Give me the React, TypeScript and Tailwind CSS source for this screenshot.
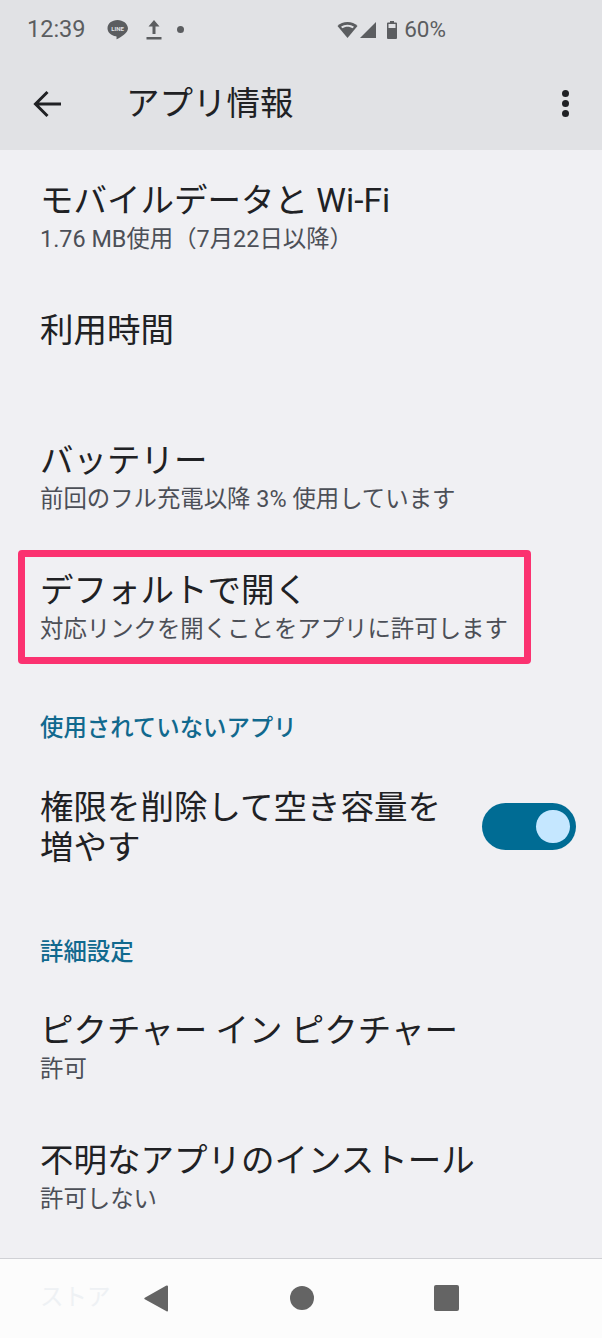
// App.tsx

const font = "font-['Roboto','Noto_Sans_CJK_JP',sans-serif]";

function SettingRow({ title, sub }: { title: string; sub?: string }) {
  return (
    <div className="h-[130px] pl-10 pt-[31px]">
      <div className="text-[33.5px] leading-10 text-[#202124]">{title}</div>
      {sub && <div className="text-[23.4px] leading-9 text-[#4c4f57]">{sub}</div>}
    </div>
  );
}

function SectionLabel({ children, className }: { children: string; className: string }) {
  return <div className={`pl-10 text-[23.4px] leading-9 font-medium text-[#11698e] ${className}`}>{children}</div>;
}

function StatusBar() {
  return (
    <div className="flex h-[57px] items-center pt-[2px] text-[#5b5d60]">
      <span className="ml-[27px] w-[80px] text-[23.5px] leading-none">12:39</span>
      <svg width="21" height="22" viewBox="0 0 21 22" className="fill-[#5b5d60]">
        <path d="M10.5 1C4.9 1 .5 4.6.5 9.2c0 4.1 3.6 7.4 8.4 8 .5.1.8.4.7.9l-.1 1.6c0 .5.3.7.8.4 3.4-2 10.7-6 10.7-10.900C20.500 4.600 16.100 1 10.500 1z" />
        <text x="10.500" y="11.500" textAnchor="middle" className="fill-[#e1e2e5] text-[6px] font-bold">LINE</text>
      </svg>
      <svg width="16" height="20" viewBox="0 0 16 20" className="ml-[18px] fill-[#5b5d60]">
        <path d="M8 0l5.500 6.500H9.500V14h-3V6.500H2.500z" />
        <rect x="0.500" y="17" width="15" height="2.500" />
      </svg>
      <span className="ml-[15px] h-[7px] w-[7px] rounded-full bg-[#5b5d60]" />
      <svg width="21" height="17" viewBox="0 0 21 17" className="ml-auto fill-[#5b5d60]">
        <path d="M10.500 1C6.500 1 3 2.500.5 5l10 12 10-12C18 2.500 14.500 1 10.500 1z" />
        <path d="M4 5.800C5.800 4.500 8 3.700 10.500 3.700S15.200 4.500 17 5.800l-1.400 1.500c-1.400-.9-3.100-1.500-5.100-1.500s-3.700.6-5.100 1.500z" className="fill-[#e1e2e5]" />
      </svg>
      <svg width="16" height="16" viewBox="0 0 16 16" className="ml-[2px] fill-[#5b5d60]">
        <path d="M16 0v16H0z" />
      </svg>
      <svg width="10" height="18" viewBox="0 0 10 18" className="ml-[11px] fill-[#5b5d60]">
        <path d="M3 0h4v1.500h2a1 1 0 0 1 1 1V17a1 1 0 0 1-1 1H1a1 1 0 0 1-1-1V2.500a1 1 0 0 1 1-1h2z" />
        <rect x="1.500" y="3" width="7" height="4" className="fill-[#e1e2e5]" />
      </svg>
      <span className="mr-[156px] ml-[7px] text-[22.5px] leading-none">60%</span>
    </div>
  );
}

function Toolbar() {
  return (
    <div className="flex h-[93px] items-center">
      <svg width="28" height="28" viewBox="0 0 28 28" fill="none" className="ml-[33px] stroke-[#202124]">
        <path d="M28 14H3M14.500 2L2.500 14l12 12" strokeWidth="3" />
      </svg>
      <span className="ml-[65px] text-[33.5px] leading-10 text-[#202124]">アプリ情報</span>
      <div className="mr-[33px] ml-auto flex flex-col gap-[3px]">
        <span className="h-[7px] w-[7px] rounded-full bg-[#202124]" />
        <span className="h-[7px] w-[7px] rounded-full bg-[#202124]" />
        <span className="h-[7px] w-[7px] rounded-full bg-[#202124]" />
      </div>
    </div>
  );
}

function NavBar() {
  return (
    <div className="flex h-[80px] items-center border-t border-[#d0d1d5] bg-[#fcfcfc] pl-[40px] pb-[1px]">
      <span className="w-[104px] text-[23.5px] leading-none text-[#eef1f4]">ストア</span>
      <svg width="24" height="27" viewBox="0 0 24 27" className="fill-[#646464]">
        <path d="M23 .5a1 1 0 0 1 1 1V25.500a1 1 0 0 1-1.500.8L.8 14.300a1 1 0 0 1 0-1.600L22 .7a1 1 0 0 1 1-.2z" />
      </svg>
      <span className="ml-[122px] h-6 w-6 rounded-full bg-[#646464]" />
      <span className="ml-[120px] h-[26px] w-[25px] rounded-[2px] bg-[#646464]" />
    </div>
  );
}

export default function App() {
  return (
    <div className={`flex h-[1338px] w-[602px] flex-col overflow-hidden bg-[#f0f0f3] ${font}`}>
      <div className="bg-[#e1e2e5]">
        <StatusBar />
        <Toolbar />
      </div>

      <div className="flex-1 overflow-hidden">
        <SettingRow title="モバイルデータと Wi-Fi" sub="1.76 MB使用（7月22日以降）" />
        <SettingRow title="利用時間" />
        <SettingRow title="バッテリー" sub="前回のフル充電以降 3% 使用しています" />
        <div className="relative">
          <SettingRow title="デフォルトで開く" sub="対応リンクを開くことをアプリに許可します" />
          <div className="absolute top-[10px] left-[18px] h-[114px] w-[513px] rounded-[4px] border-[7px] border-[#fb3270]" />
        </div>

        <SectionLabel className="pt-[40px]">使用されていないアプリ</SectionLabel>

        <div className="mt-[42px] flex items-center justify-between pr-[26px] pl-10">
          <div className="text-[33.5px] leading-10 text-[#202124]">
            権限を削除して空き容量を
            <br />
            増やす
          </div>
          <div className="-mt-[4px] flex h-[47px] w-[94px] items-center justify-end rounded-full bg-[#006c94] pr-[6px]">
            <span className="h-[33px] w-[34px] rounded-full bg-[#c5e7ff]" />
          </div>
        </div>

        <SectionLabel className="pt-[66px]">詳細設定</SectionLabel>

        <div className="mt-[10px]">
          <SettingRow title="ピクチャー イン ピクチャー" sub="許可" />
          <SettingRow title="不明なアプリのインストール" sub="許可しない" />
        </div>
      </div>

      <NavBar />
    </div>
  );
}
